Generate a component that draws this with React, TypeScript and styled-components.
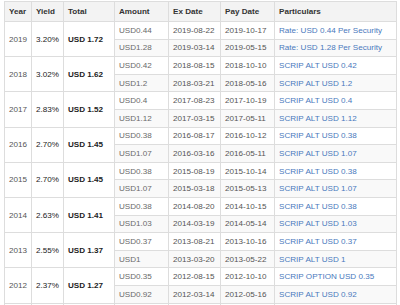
import React from "react";
import styled, { createGlobalStyle } from "styled-components";

const GlobalStyle = createGlobalStyle`
    html, body {
        margin: 0;
        padding: 0;
        background: #ffffff;
        overflow: hidden;
    }
`;

const Page = styled.div`
    padding: 1px 4px 0 4px;
    font-family: "Liberation Sans", Arial, sans-serif;
    font-size: 8.1px;
`;

const Table = styled.table`
    width: 392px;
    border-collapse: collapse;
    table-layout: fixed;
    border: 1px solid #dddddd;
`;

const HeadCell = styled.th`
    height: 19px;
    padding: 0 4px;
    text-align: left;
    font-weight: bold;
    color: #333333;
    background: #f3f3f3;
    border: 1px solid #dddddd;
    white-space: nowrap;
`;

const Cell = styled.td<{ $tone?: "year" | "yield" | "total" | "amount" | "date" | "link"; $striped?: boolean }>`
    height: 16.6px;
    padding: 0 4px;
    vertical-align: middle;
    white-space: nowrap;
    border: 1px solid #dddddd;
    background: ${(p) => (p.$striped ? "#f9f9f9" : "#ffffff")};
    color: ${(p) =>
        p.$tone === "link"
            ? "#4a79bd"
            : p.$tone === "yield" || p.$tone === "total"
            ? "#222222"
            : p.$tone === "amount"
            ? "#6a6a6a"
            : "#555555"};
    font-weight: ${(p) => (p.$tone === "total" ? "bold" : "normal")};
`;

type Payout = [string, string, string, string];

interface YearRow {
    year: string;
    yieldPct: string;
    total: string;
    payouts: Payout[];
}

const rows: YearRow[] = [
    {
        year: "2019",
        yieldPct: "3.20%",
        total: "USD 1.72",
        payouts: [
            ["USD0.44", "2019-08-22", "2019-10-17", "Rate: USD 0.44 Per Security"],
            ["USD1.28", "2019-03-14", "2019-05-15", "Rate: USD 1.28 Per Security"],
        ],
    },
    {
        year: "2018",
        yieldPct: "3.02%",
        total: "USD 1.62",
        payouts: [
            ["USD0.42", "2018-08-15", "2018-10-10", "SCRIP ALT USD 0.42"],
            ["USD1.2", "2018-03-21", "2018-05-16", "SCRIP ALT USD 1.2"],
        ],
    },
    {
        year: "2017",
        yieldPct: "2.83%",
        total: "USD 1.52",
        payouts: [
            ["USD0.4", "2017-08-23", "2017-10-19", "SCRIP ALT USD 0.4"],
            ["USD1.12", "2017-03-15", "2017-05-11", "SCRIP ALT USD 1.12"],
        ],
    },
    {
        year: "2016",
        yieldPct: "2.70%",
        total: "USD 1.45",
        payouts: [
            ["USD0.38", "2016-08-17", "2016-10-12", "SCRIP ALT USD 0.38"],
            ["USD1.07", "2016-03-16", "2016-05-11", "SCRIP ALT USD 1.07"],
        ],
    },
    {
        year: "2015",
        yieldPct: "2.70%",
        total: "USD 1.45",
        payouts: [
            ["USD0.38", "2015-08-19", "2015-10-14", "SCRIP ALT USD 0.38"],
            ["USD1.07", "2015-03-18", "2015-05-13", "SCRIP ALT USD 1.07"],
        ],
    },
    {
        year: "2014",
        yieldPct: "2.63%",
        total: "USD 1.41",
        payouts: [
            ["USD0.38", "2014-08-20", "2014-10-15", "SCRIP ALT USD 0.38"],
            ["USD1.03", "2014-03-19", "2014-05-14", "SCRIP ALT USD 1.03"],
        ],
    },
    {
        year: "2013",
        yieldPct: "2.55%",
        total: "USD 1.37",
        payouts: [
            ["USD0.37", "2013-08-21", "2013-10-16", "SCRIP ALT USD 0.37"],
            ["USD1", "2013-03-20", "2013-05-22", "SCRIP ALT USD 1"],
        ],
    },
    {
        year: "2012",
        yieldPct: "2.37%",
        total: "USD 1.27",
        payouts: [
            ["USD0.35", "2012-08-15", "2012-10-10", "SCRIP OPTION USD 0.35"],
            ["USD0.92", "2012-03-14", "2012-05-16", "SCRIP ALT USD 0.92"],
        ],
    },
    {
        // next year's block, only its top border shows at the bottom edge
        year: "",
        yieldPct: "",
        total: "",
        payouts: [["", "", "", ""]],
    },
];

const colWidths = [27, 32, 51, 54, 52, 54, 122];

const App: React.FC = () => {
    return (
        <Page>
            <GlobalStyle />
            <Table>
                <colgroup>
                    {colWidths.map((w, i) => (
                        <col key={i} style={{ width: w }} />
                    ))}
                </colgroup>
                <thead>
                    <tr>
                        <HeadCell>Year</HeadCell>
                        <HeadCell>Yield</HeadCell>
                        <HeadCell>Total</HeadCell>
                        <HeadCell>Amount</HeadCell>
                        <HeadCell>Ex Date</HeadCell>
                        <HeadCell>Pay Date</HeadCell>
                        <HeadCell>Particulars</HeadCell>
                    </tr>
                </thead>
                <tbody>
                    {rows.map((r, n) =>
                        r.payouts.map((p, i) => (
                            <tr key={n + "-" + i}>
                                {i === 0 && (
                                    <>
                                        <Cell $tone="year" rowSpan={r.payouts.length}>
                                            {r.year}
                                        </Cell>
                                        <Cell $tone="yield" rowSpan={r.payouts.length}>
                                            {r.yieldPct}
                                        </Cell>
                                        <Cell $tone="total" rowSpan={r.payouts.length}>
                                            {r.total}
                                        </Cell>
                                    </>
                                )}
                                <Cell $tone="amount" $striped={i === 1}>
                                    {p[0]}
                                </Cell>
                                <Cell $tone="date" $striped={i === 1}>
                                    {p[1]}
                                </Cell>
                                <Cell $tone="date" $striped={i === 1}>
                                    {p[2]}
                                </Cell>
                                <Cell $tone="link" $striped={i === 1}>
                                    {p[3]}
                                </Cell>
                            </tr>
                        ))
                    )}
                </tbody>
            </Table>
        </Page>
    );
};

export default App;
